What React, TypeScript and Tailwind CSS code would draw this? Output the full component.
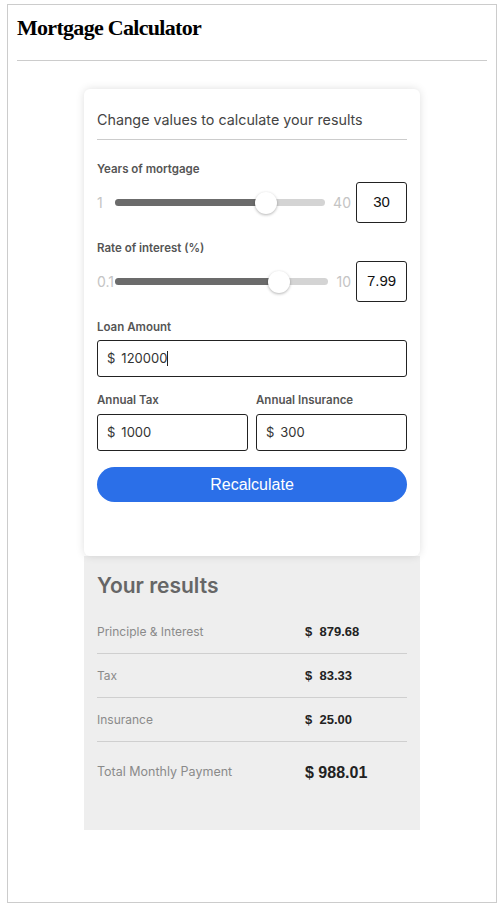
import React from 'react';

const sans = "font-['Inter','Liberation_Sans',sans-serif]";
const arial = "font-['Liberation_Sans',Arial,sans-serif]";

const Slider = ({ min, max, value }: { min: number; max: number; value: number }) => {
  // native range maths: thumb centre = left + r + p * (width - 2r)
  const p = (value - min) / (max - min);
  const pos = `calc(11px + ${p} * (100% - 22px))`;
  return (
    <div className="mt-[5px] flex items-center h-[41px]">
      <span className={`w-[18px] text-[14px] text-[#c4c4c4] ${sans}`}>{min}</span>
      <div className="relative flex-1 h-[7px] rounded-full bg-[#d4d4d4]">
        <div className="absolute left-0 top-0 h-full rounded-full bg-[#6b6b6b]" style={{ width: pos }} />
        <div
          className="absolute top-[2px] w-[22px] h-[22px] -ml-[11px] -mt-[9px] rounded-full bg-white shadow-[0_1px_3px_rgba(0,0,0,0.3)]"
          style={{ left: pos }}
        />
      </div>
      <span className={`ml-[8px] mr-[5px] text-[14px] text-[#c4c4c4] ${sans}`}>{max}</span>
      <div className={`w-[51px] h-[41px] flex items-center justify-center border border-[#222] rounded-[3px] text-[15px] text-[#111] ${arial}`}>
        {value}
      </div>
    </div>
  );
};

const Label = ({ children, className = '' }: { children: React.ReactNode; className?: string }) => (
  <div className={`text-[11.5px] leading-[16px] font-semibold text-[#555] ${sans} ${className}`}>{children}</div>
);

const MoneyInput = ({ value, caret }: { value: string; caret?: boolean }) => (
  <div className={`h-[37px] flex items-center pl-[9px] border border-[#222] rounded-[3px] text-[13px] text-[#333] ${sans}`}>
    <span>$</span>
    <span className="ml-[6px]">{value}</span>
    {caret && <span className="inline-block w-px h-[15px] bg-[#222]" />}
  </div>
);

const ResultRow = ({ label, value, total }: { label: string; value: string; total?: boolean }) => (
  <div className={`flex items-center ${total ? 'h-[61px]' : 'h-[44px] border-b border-[#cfcfcf]'}`}>
    <span className={`w-[208px] ${total ? 'text-[12.5px]' : 'text-[12px]'} text-[#8a8a8a] ${sans}`}>{label}</span>
    <span className={`font-bold text-[#222] ${total ? 'text-[16px]' : 'text-[13px]'} ${arial}`}>
      ${total ? '\u00a0' : '\u00a0\u00a0'}
      {value}
    </span>
  </div>
);

export default function App() {
  return (
    <div className="pt-[4px] pl-[7px] bg-white">
      <div className="w-[490px] h-[899px] border border-[#cccccc] px-[9px]">
        <h1 className="mt-[9px] text-[22px] leading-[28px] font-bold tracking-[-0.7px] text-black font-['Liberation_Serif','Times_New_Roman',serif]">
          Mortgage Calculator
        </h1>
        <div className="mt-[18px] border-b border-[#cccccc]" />

        <div className="mx-auto mt-[28px] w-[336px]">
          <div className="relative z-10 bg-white rounded-[6px] shadow-[0_0_9px_rgba(0,0,0,0.13)] px-[13px] pt-[21px] pb-[54px]">
            <div className={`text-[14.3px] leading-[20px] text-[#444] pb-[9px] border-b border-[#cccccc] ${sans}`}>
              Change values to calculate your results
            </div>

            <Label className="mt-[21px]">Years of mortgage</Label>
            <Slider min={1} max={40} value={30} />

            <Label className="mt-[17px]">Rate of interest (%)</Label>
            <Slider min={0.1} max={10} value={7.99} />

            <Label className="mt-[17px]">Loan Amount</Label>
            <div className="mt-[5px]">
              <MoneyInput value="120000" caret />
            </div>

            <div className="mt-[15px] grid grid-cols-2 gap-[8px]">
              <div>
                <Label>Annual Tax</Label>
                <div className="mt-[6px]">
                  <MoneyInput value="1000" />
                </div>
              </div>
              <div>
                <Label>Annual Insurance</Label>
                <div className="mt-[6px]">
                  <MoneyInput value="300" />
                </div>
              </div>
            </div>

            <button className={`mt-[16px] w-full h-[35px] rounded-full bg-[#2b6fe8] text-white text-[16px] ${arial}`}>
              Recalculate
            </button>
          </div>

          <div className="bg-[#eeeeee] px-[13px] pt-[16px] pb-[27px]">
            <div className={`text-[21px] leading-[28px] font-semibold text-[#666] ${sans}`}>Your results</div>
            <div className="mt-[10px]">
              <ResultRow label="Principle & Interest" value="879.68" />
              <ResultRow label="Tax" value="83.33" />
              <ResultRow label="Insurance" value="25.00" />
              <ResultRow label="Total Monthly Payment" value="988.01" total />
            </div>
          </div>
        </div>
      </div>
    </div>
  );
}
